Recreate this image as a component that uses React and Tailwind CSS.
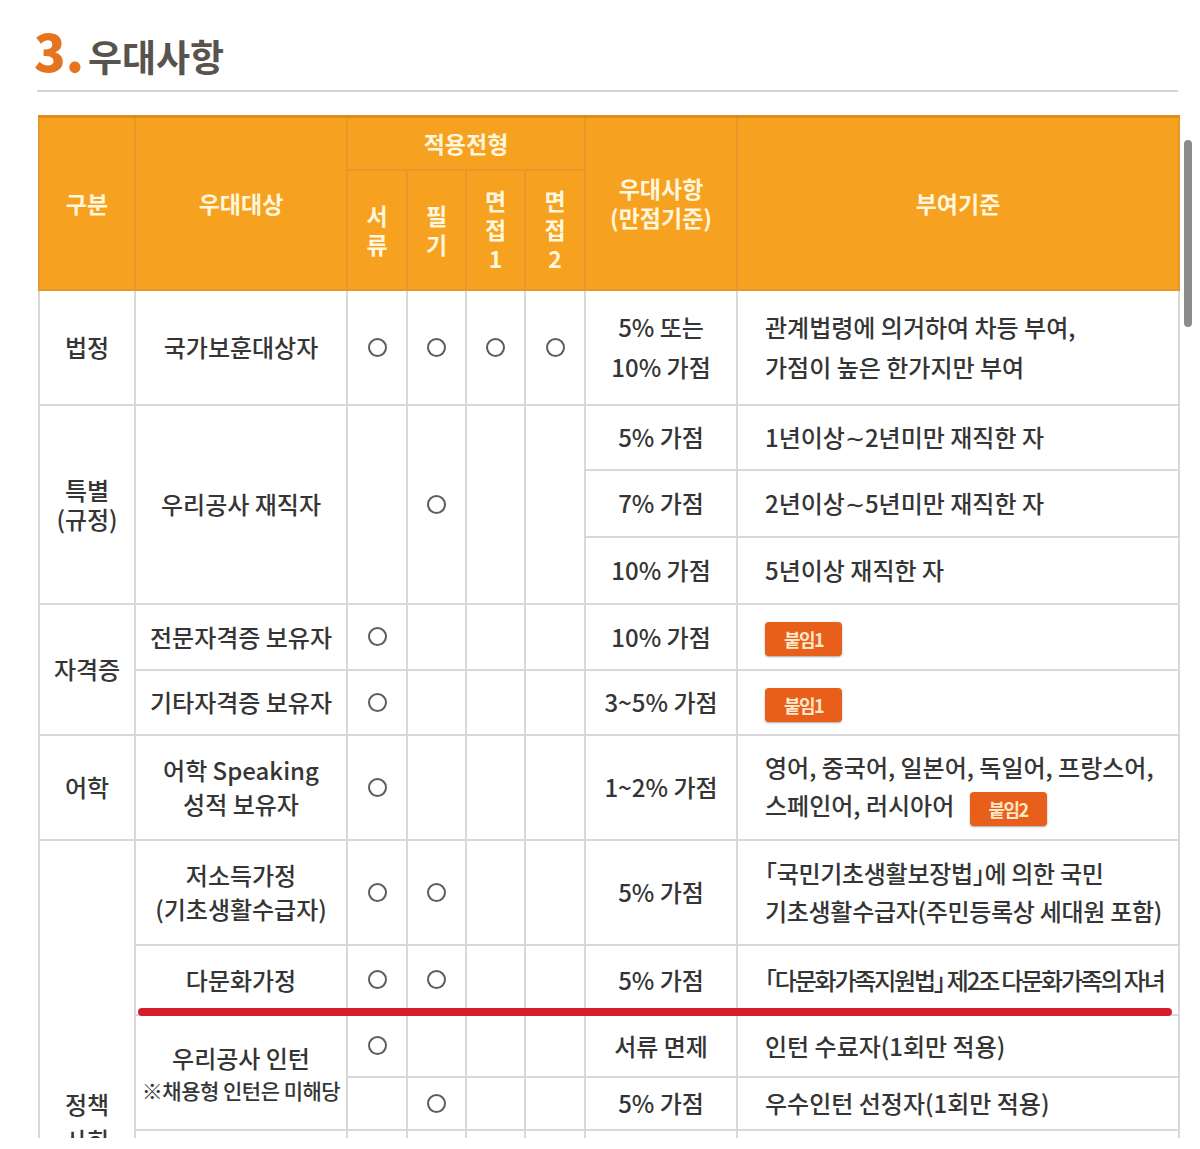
const body = "border-2 border-[#d8d8d8] p-0 text-center align-middle";
const head = "border-2 border-[#e8982a] p-0 text-center align-middle font-bold";

function O() {
  return (
    <span className="mx-auto block h-[19px] w-[19px] rounded-full border-2 border-[#5c5c5c]" />
  );
}

function Badge({ children }) {
  return (
    <span className="inline-flex h-[34px] w-[77px] items-center justify-center rounded-[4px] bg-[#e85e1b] align-middle text-[18px] font-bold leading-none tracking-[-1.5px] text-[#ffe6c6] shadow-[0_1px_2px_rgba(0,0,0,0.35)]">
      {children}
    </span>
  );
}

function Desc({ children, className = "" }) {
  return <td className={`${body} pl-[27px] text-left ${className}`}>{children}</td>;
}

// vertical header letters, one per line
function Stack({ items }) {
  return (
    <div className="flex flex-col items-center">
      {items.map((ch, i) => (
        <span key={i} className="block h-[29px] leading-[29px]">
          {ch}
        </span>
      ))}
    </div>
  );
}

export default function App() {
  return (
    <div className="relative h-[1149px] w-[1200px] overflow-hidden bg-white font-['Noto_Sans_CJK_KR','Noto_Sans',sans-serif] text-[#353535]">
      <div className="h-[1138px] overflow-hidden">
        <div className="flex h-[90px] items-end pb-[14px] pl-[34px]">
          <div className="flex items-baseline">
            <span className="text-[52px] font-black leading-none text-[#e4741e]">3.</span>
            <span className="ml-[4px] text-[37px] font-bold leading-none text-[#59534d]">우대사항</span>
          </div>
        </div>
        <div className="ml-[37px] h-[2px] w-[1141px] bg-[#d4d4d4]" />

        <table className="ml-[38px] mt-[23px] w-[1140px] table-fixed border-collapse text-[24px] font-medium leading-[38px]">
          <colgroup>
            <col className="w-[96px]" />
            <col className="w-[212px]" />
            <col className="w-[60px]" />
            <col className="w-[59px]" />
            <col className="w-[59px]" />
            <col className="w-[60px]" />
            <col className="w-[152px]" />
            <col className="w-[442px]" />
          </colgroup>
          <thead className="bg-[#f7a120] text-[23px] leading-[30px] text-[#fff6dc]">
            <tr className="h-[53px] border-t-[3px] border-t-[#e18c17]">
              <th rowSpan={2} className={head}>구분</th>
              <th rowSpan={2} className={head}>우대대상</th>
              <th colSpan={4} className={head}>적용전형</th>
              <th rowSpan={2} className={head}>
                <Stack items={["우대사항", "(만점기준)"]} />
              </th>
              <th rowSpan={2} className={head}>부여기준</th>
            </tr>
            <tr className="h-[120px]">
              <th className={head}><Stack items={["서", "류"]} /></th>
              <th className={head}><Stack items={["필", "기"]} /></th>
              <th className={head}><Stack items={["면", "접", "1"]} /></th>
              <th className={head}><Stack items={["면", "접", "2"]} /></th>
            </tr>
          </thead>
          <tbody>
            <tr className="h-[115px]">
              <td className={body}>법정</td>
              <td className={body}>국가보훈대상자</td>
              <td className={body}><O /></td>
              <td className={body}><O /></td>
              <td className={body}><O /></td>
              <td className={body}><O /></td>
              <td className={`${body} leading-[40px]`}>
                5% 또는
                <br />
                10% 가점
              </td>
              <Desc className="leading-[40px]">
                관계법령에 의거하여 차등 부여,
                <br />
                가점이 높은 한가지만 부여
              </Desc>
            </tr>

            <tr className="h-[65px]">
              <td rowSpan={3} className={body}>
                <Stack items={["특별", "(규정)"]} />
              </td>
              <td rowSpan={3} className={body}>우리공사 재직자</td>
              <td rowSpan={3} className={body} />
              <td rowSpan={3} className={body}><O /></td>
              <td rowSpan={3} className={body} />
              <td rowSpan={3} className={body} />
              <td className={body}>5% 가점</td>
              <Desc>1년이상∼2년미만 재직한 자</Desc>
            </tr>
            <tr className="h-[67px]">
              <td className={body}>7% 가점</td>
              <Desc>2년이상∼5년미만 재직한 자</Desc>
            </tr>
            <tr className="h-[67px]">
              <td className={body}>10% 가점</td>
              <Desc>5년이상 재직한 자</Desc>
            </tr>

            <tr className="h-[66px]">
              <td rowSpan={2} className={body}>자격증</td>
              <td className={body}>전문자격증 보유자</td>
              <td className={body}><O /></td>
              <td className={body} />
              <td className={body} />
              <td className={body} />
              <td className={body}>10% 가점</td>
              <Desc>
                <Badge>붙임1</Badge>
              </Desc>
            </tr>
            <tr className="h-[65px]">
              <td className={body}>기타자격증 보유자</td>
              <td className={body}><O /></td>
              <td className={body} />
              <td className={body} />
              <td className={body} />
              <td className={body}>3~5% 가점</td>
              <Desc>
                <Badge>붙임1</Badge>
              </Desc>
            </tr>

            <tr className="h-[105px]">
              <td className={body}>어학</td>
              <td className={`${body} leading-[34px]`}>
                어학 Speaking
                <br />
                성적 보유자
              </td>
              <td className={body}><O /></td>
              <td className={body} />
              <td className={body} />
              <td className={body} />
              <td className={body}>1~2% 가점</td>
              <Desc>
                영어, 중국어, 일본어, 독일어, 프랑스어,
                <br />
                스페인어, 러시아어 <span className="ml-[10px]"><Badge>붙임2</Badge></span>
              </Desc>
            </tr>

            <tr className="h-[105px]">
              <td rowSpan={6} className={`${body} align-top pt-[245px] leading-[36px]`}>
                정책
                <br />
                사회
              </td>
              <td className={`${body} leading-[34px]`}>
                저소득가정
                <br />
                (기초생활수급자)
              </td>
              <td className={body}><O /></td>
              <td className={body}><O /></td>
              <td className={body} />
              <td className={body} />
              <td className={body}>5% 가점</td>
              <Desc className="tracking-[-0.3px]">
                ｢국민기초생활보장법｣에 의한 국민
                <br />
                기초생활수급자(주민등록상 세대원 포함)
              </Desc>
            </tr>
            <tr className="h-[70px]">
              <td className={body}>다문화가정</td>
              <td className={body}><O /></td>
              <td className={body}><O /></td>
              <td className={body} />
              <td className={body} />
              <td className={body}>5% 가점</td>
              <Desc className="whitespace-nowrap tracking-[-2.2px]">
                ｢다문화가족지원법｣ 제2조 다문화가족의 자녀
              </Desc>
            </tr>
            <tr className="h-[62px]">
              <td rowSpan={2} className={body}>
                <div className="leading-[36px]">우리공사 인턴</div>
                <div className="text-[21px] leading-[28px] tracking-[-0.5px]">※채용형 인턴은 미해당</div>
              </td>
              <td className={body}><O /></td>
              <td className={body} />
              <td className={body} />
              <td className={body} />
              <td className={body}>서류 면제</td>
              <Desc>인턴 수료자(1회만 적용)</Desc>
            </tr>
            <tr className="h-[53px]">
              <td className={body} />
              <td className={body}><O /></td>
              <td className={body} />
              <td className={body} />
              <td className={body}>5% 가점</td>
              <Desc>우수인턴 선정자(1회만 적용)</Desc>
            </tr>
            <tr className="h-[60px]">
              <td className={body} />
              <td className={body} />
              <td className={body} />
              <td className={body} />
              <td className={body} />
              <td className={body} />
              <Desc />
            </tr>
            <tr className="h-[60px]">
              <td className={body} />
              <td className={body} />
              <td className={body} />
              <td className={body} />
              <td className={body} />
              <td className={body} />
              <Desc />
            </tr>
          </tbody>
        </table>
      </div>

      <div className="absolute left-[138px] top-[1008px] h-[8px] w-[1034px] rounded-full bg-[#d61d2b]" />
      <div className="absolute left-[1184px] top-[140px] h-[187px] w-[8px] rounded-full bg-[#8c8c8c]" />
    </div>
  );
}
